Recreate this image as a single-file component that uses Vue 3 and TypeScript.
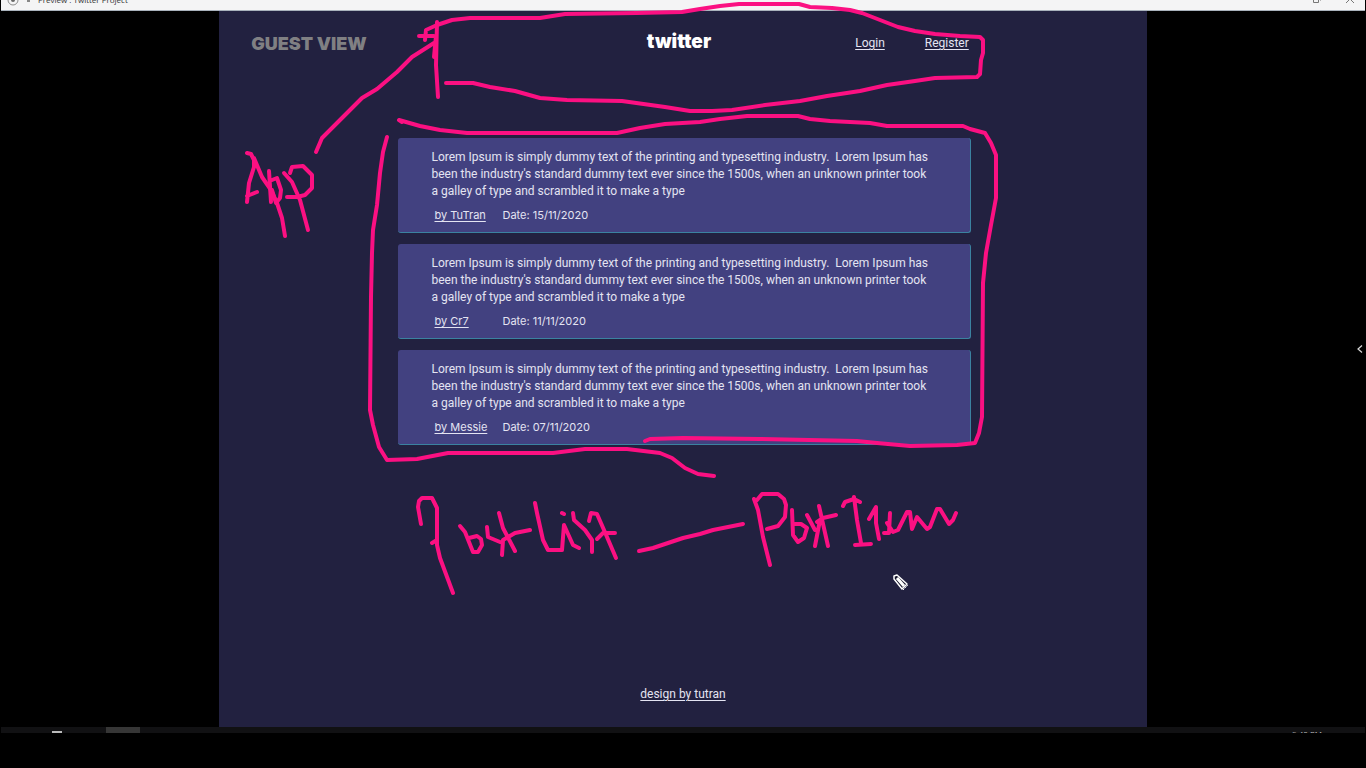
<script setup lang="ts">
interface Post {
  id: number
  author: string
  date: string
  body: string
}

const body =
  "Lorem Ipsum is simply dummy text of the printing and typesetting industry.  Lorem Ipsum has\nbeen the industry's standard dummy text ever since the 1500s, when an unknown printer took\na galley of type and scrambled it to make a type"

const posts: Post[] = [
  { id: 1, author: 'TuTran', date: '15/11/2020', body },
  { id: 2, author: 'Cr7', date: '11/11/2020', body },
  { id: 3, author: 'Messie', date: '07/11/2020', body },
]

// Pen strokes drawn over the presented page
const strokes: string[] = [
  // loop around the header
  'M419 36H434M425 40L426 30L437 25L452 20L470 18L540 18L565 14L637 13L682 12L700 9L720 6L739 4H799L810 7L832 8L850 10L862 13L880 20L898 27L915 31L935 34L960 36L980 37L983 40V53L981 60L980 74L977 77L935 78L915 81L887 85L860 91L827 96L800 101L765 105L732 110L712 111L690 111L665 107L622 101L567 100L540 98L515 91L490 87L473 83H446',
  'M437 22L436 65L438 97M436 36L434 57',
  'M434 43L412 57L397 72L377 89L362 98L337 123L322 138L316 152',
  // loop around the list
  'M402 122L399 120L420 126L440 130L467 133H617L640 128L665 124L700 122L720 119L747 116H798L810 119L830 121L870 123L887 126H963L970 129L985 133L991 143L996 155V198L991 225L986 253L983 283L982 417L979 433L975 443L957 445L910 446L877 443L857 441L760 439L683 438L650 439L645 441',
  'M387 137L383 152L380 173L377 205L373 230L372 253L371 297L370 410L373 425L379 447L387 460L417 459L448 453H553L585 449H627L660 453L672 458L685 468L698 474L714 476',
  // App
  'M247 153L251 154L254 160V167L249 183L247 202M247 196L257 192M254 158L262 177L271 190L277 203L282 218L285 236',
  'M269 171L271 202M272 180L277 178L281 190L280 198L276 203L272 190',
  'M284 173L292 182L300 200L308 230M290 173L292 167L303 166L312 175V188L305 195L297 197H287',
  // PostList
  'M421 524L418 507L419 501L422 498H432L437 508V545L440 558L453 593M432 543L437 540',
  'M460 526L465 532L473 552H478L482 545L481 539L477 536L469 538',
  'M487 527L488 537L500 542M502 555L503 540L515 533L530 530M499 513L503 528L515 551',
  'M535 503L537 513L543 540L548 550H562L564 525L573 545L579 548M562 513L564 514',
  'M573 513L574 520L585 530L592 540V552M589 521L591 513L597 514L604 530L616 558M597 539L603 533H615',
  'M639 551L653 548L683 538L700 534L713 530L743 524',
  // PostItem
  'M754 499L758 510L763 537L770 565M757 500L762 494H778L784 499L786 505L785 517L778 526L767 529',
  'M792 510L793 535L798 542L804 538L807 528L801 524L795 524M807 515L815 530M820 520L815 546M819 506L828 546M817 522L823 518L836 515',
  'M843 506L845 502L854 499L860 502M854 497L857 520L861 543M855 545L871 544',
  'M869 519L876 507V523L879 539M884 533H889L890 513M887 523L893 532L898 530L907 512H910L912 529L917 517L927 529L930 527L937 509H940L949 524L953 520L956 513',
]
</script>

<template>
  <div class="screen">
    <header class="titlebar">
      <svg class="app-icon" viewBox="0 0 12 12" aria-hidden="true">
        <circle cx="6" cy="6" r="5" fill="none" stroke="#8c8c8c" />
        <circle cx="6" cy="6" r="2" fill="#666" />
      </svg>
      <span class="caret"></span>
      <span class="window-title">Preview : Twitter Project</span>
      <svg class="window-icon" viewBox="0 0 10 10" aria-hidden="true">
        <path d="M1.500 2.500h5v6h-5zM4 .5h4.500v6" fill="none" stroke="#777" />
      </svg>
      <svg class="window-icon" viewBox="0 0 10 10" aria-hidden="true">
        <path d="M1 1l8 8M9 1l-8 8" fill="none" stroke="#777" />
      </svg>
    </header>

    <div class="stage">
      <div class="page">
        <header class="page-head">
          <strong class="view-name">GUEST VIEW</strong>
          <h1 class="brand">twitter</h1>
          <nav class="links">
            <a href="#login">Login</a>
            <a href="#register">Register</a>
          </nav>
        </header>

        <main class="posts">
          <article v-for="post in posts" :key="post.id" class="post">
            <p class="post-body">{{ post.body }}</p>
            <footer class="post-meta">
              <span class="author"><a href="#author">by {{ post.author }}</a></span>
              <span>Date: {{ post.date }}</span>
            </footer>
          </article>
        </main>

        <footer class="page-foot"><a href="#design">design by tutran</a></footer>
      </div>

      <button class="drawer" type="button" aria-label="Open panel">
        <svg viewBox="0 0 6 8" aria-hidden="true">
          <path d="M5 .5L1 4l4 3.500" fill="none" stroke="#d8d8d8" stroke-width="1.200" />
        </svg>
      </button>
    </div>

    <footer class="taskbar">
      <span class="task-mark"></span>
      <span class="task-active"></span>
      <span class="clock">9:40 PM</span>
    </footer>

    <svg class="ink" viewBox="0 0 1366 768" preserveAspectRatio="xMidYMin meet" aria-hidden="true">
      <path v-for="(stroke, i) in strokes" :key="i" :d="stroke" class="stroke" />
      <g fill="none" stroke-linejoin="round">
        <path d="M894 579L894 576L897 575L907 584L902 589Z" fill="#15152b" stroke="#fff" stroke-width="1.500" />
        <path d="M897 578L904 586" stroke="#fff" stroke-width="3" />
        <path d="M903 590L908 585" stroke="#fff" stroke-dasharray="2 1" />
      </g>
    </svg>
  </div>
</template>

<style>
body {
  margin: 0;
  background: #000;
}
</style>

<style scoped>
.screen {
  position: relative;
  display: flex;
  flex-direction: column;
  box-sizing: border-box;
  min-height: 100vh;
  padding: 0 1px 35px;
  overflow: hidden;
  background: #000;
  color: #e4e4f2;
  font-family: Roboto, "Open Sans", sans-serif;
  font-size: 12px;
  line-height: 17px;
}

a {
  color: inherit;
  text-decoration: underline;
  text-underline-offset: 2px;
}

.titlebar {
  display: flex;
  align-items: flex-end;
  height: 10px;
  padding: 0 10px 0 6px;
  overflow: hidden;
  border-bottom: 1px solid #a9b2bc;
  background: #f4f4f5;
  color: #333;
  font-family: "Open Sans", sans-serif;
  font-size: 8px;
  line-height: 20px;
}

.app-icon {
  flex: none;
  width: 12px;
  height: 12px;
  margin-bottom: 4px;
}

.caret {
  width: 3px;
  height: 2px;
  margin: 0 8px 8px 8px;
  background: #888;
}

.window-title {
  flex: 1;
}

.window-icon {
  flex: none;
  width: 10px;
  height: 10px;
  margin: 0 0 6px 23px;
}

.stage {
  display: grid;
  flex: 1;
  grid-template-columns: 16% 68% 16%;
}

.page {
  display: flex;
  grid-column: 2;
  flex-direction: column;
  background: #222140;
}

.page-head {
  display: grid;
  grid-template-columns: 1fr auto 1fr;
  align-items: start;
  padding: 21px 40px 0 32px;
}

.view-name,
.brand {
  font-family: Inter, "Open Sans", sans-serif;
  font-weight: 900;
}

.view-name {
  color: #808083;
  font-size: 18px;
  line-height: 24px;
}

.brand {
  margin: 0;
  color: #fff;
  font-size: 19px;
  line-height: 20px;
}

.links {
  display: flex;
  gap: 40px;
  justify-self: end;
  padding: 3px 138px 0 0;
}

.posts {
  display: flex;
  flex-direction: column;
  gap: 11px;
  align-self: center;
  box-sizing: border-box;
  width: 100%;
  max-width: 577px;
  padding: 82px 0 0 4px;
}

.post {
  padding: 11px 32px 8px 33px;
  border-right: 1px solid #3b82a0;
  border-bottom: 1px solid #3b82a0;
  border-radius: 3px;
  background: #424180;
}

.post-body {
  margin: 0;
  white-space: pre-wrap;
}

.post-meta {
  display: flex;
  padding: 7px 0 0 3px;
  font-family: Inter, "Open Sans", sans-serif;
  font-size: 11px;
}

.author {
  width: 68px;
}

.page-foot {
  margin-top: auto;
  padding-bottom: 24px;
  text-align: center;
}

.drawer {
  display: flex;
  grid-column: 3;
  align-self: center;
  justify-self: end;
  margin: 0 2px 40px 0;
  padding: 0;
  border: 0;
  background: none;
}

.drawer svg {
  width: 6px;
  height: 8px;
}

.taskbar {
  display: flex;
  height: 6px;
  padding: 0 43px 0 51px;
  overflow: hidden;
  background: #111113;
  color: #bbb;
  font-family: "Open Sans", sans-serif;
  font-size: 8px;
  line-height: 13px;
}

.task-mark {
  width: 10px;
  height: 2px;
  margin-top: 4px;
  background: #bbb;
}

.task-active {
  width: 34px;
  margin-left: 44px;
  background: #363636;
}

.clock {
  margin-left: auto;
}

.ink {
  position: absolute;
  top: 0;
  left: 0;
  width: 100%;
  height: 100%;
  pointer-events: none;
}

.stroke {
  fill: none;
  stroke: #fb1082;
  stroke-linecap: round;
  stroke-linejoin: round;
  stroke-width: 4;
}
</style>
